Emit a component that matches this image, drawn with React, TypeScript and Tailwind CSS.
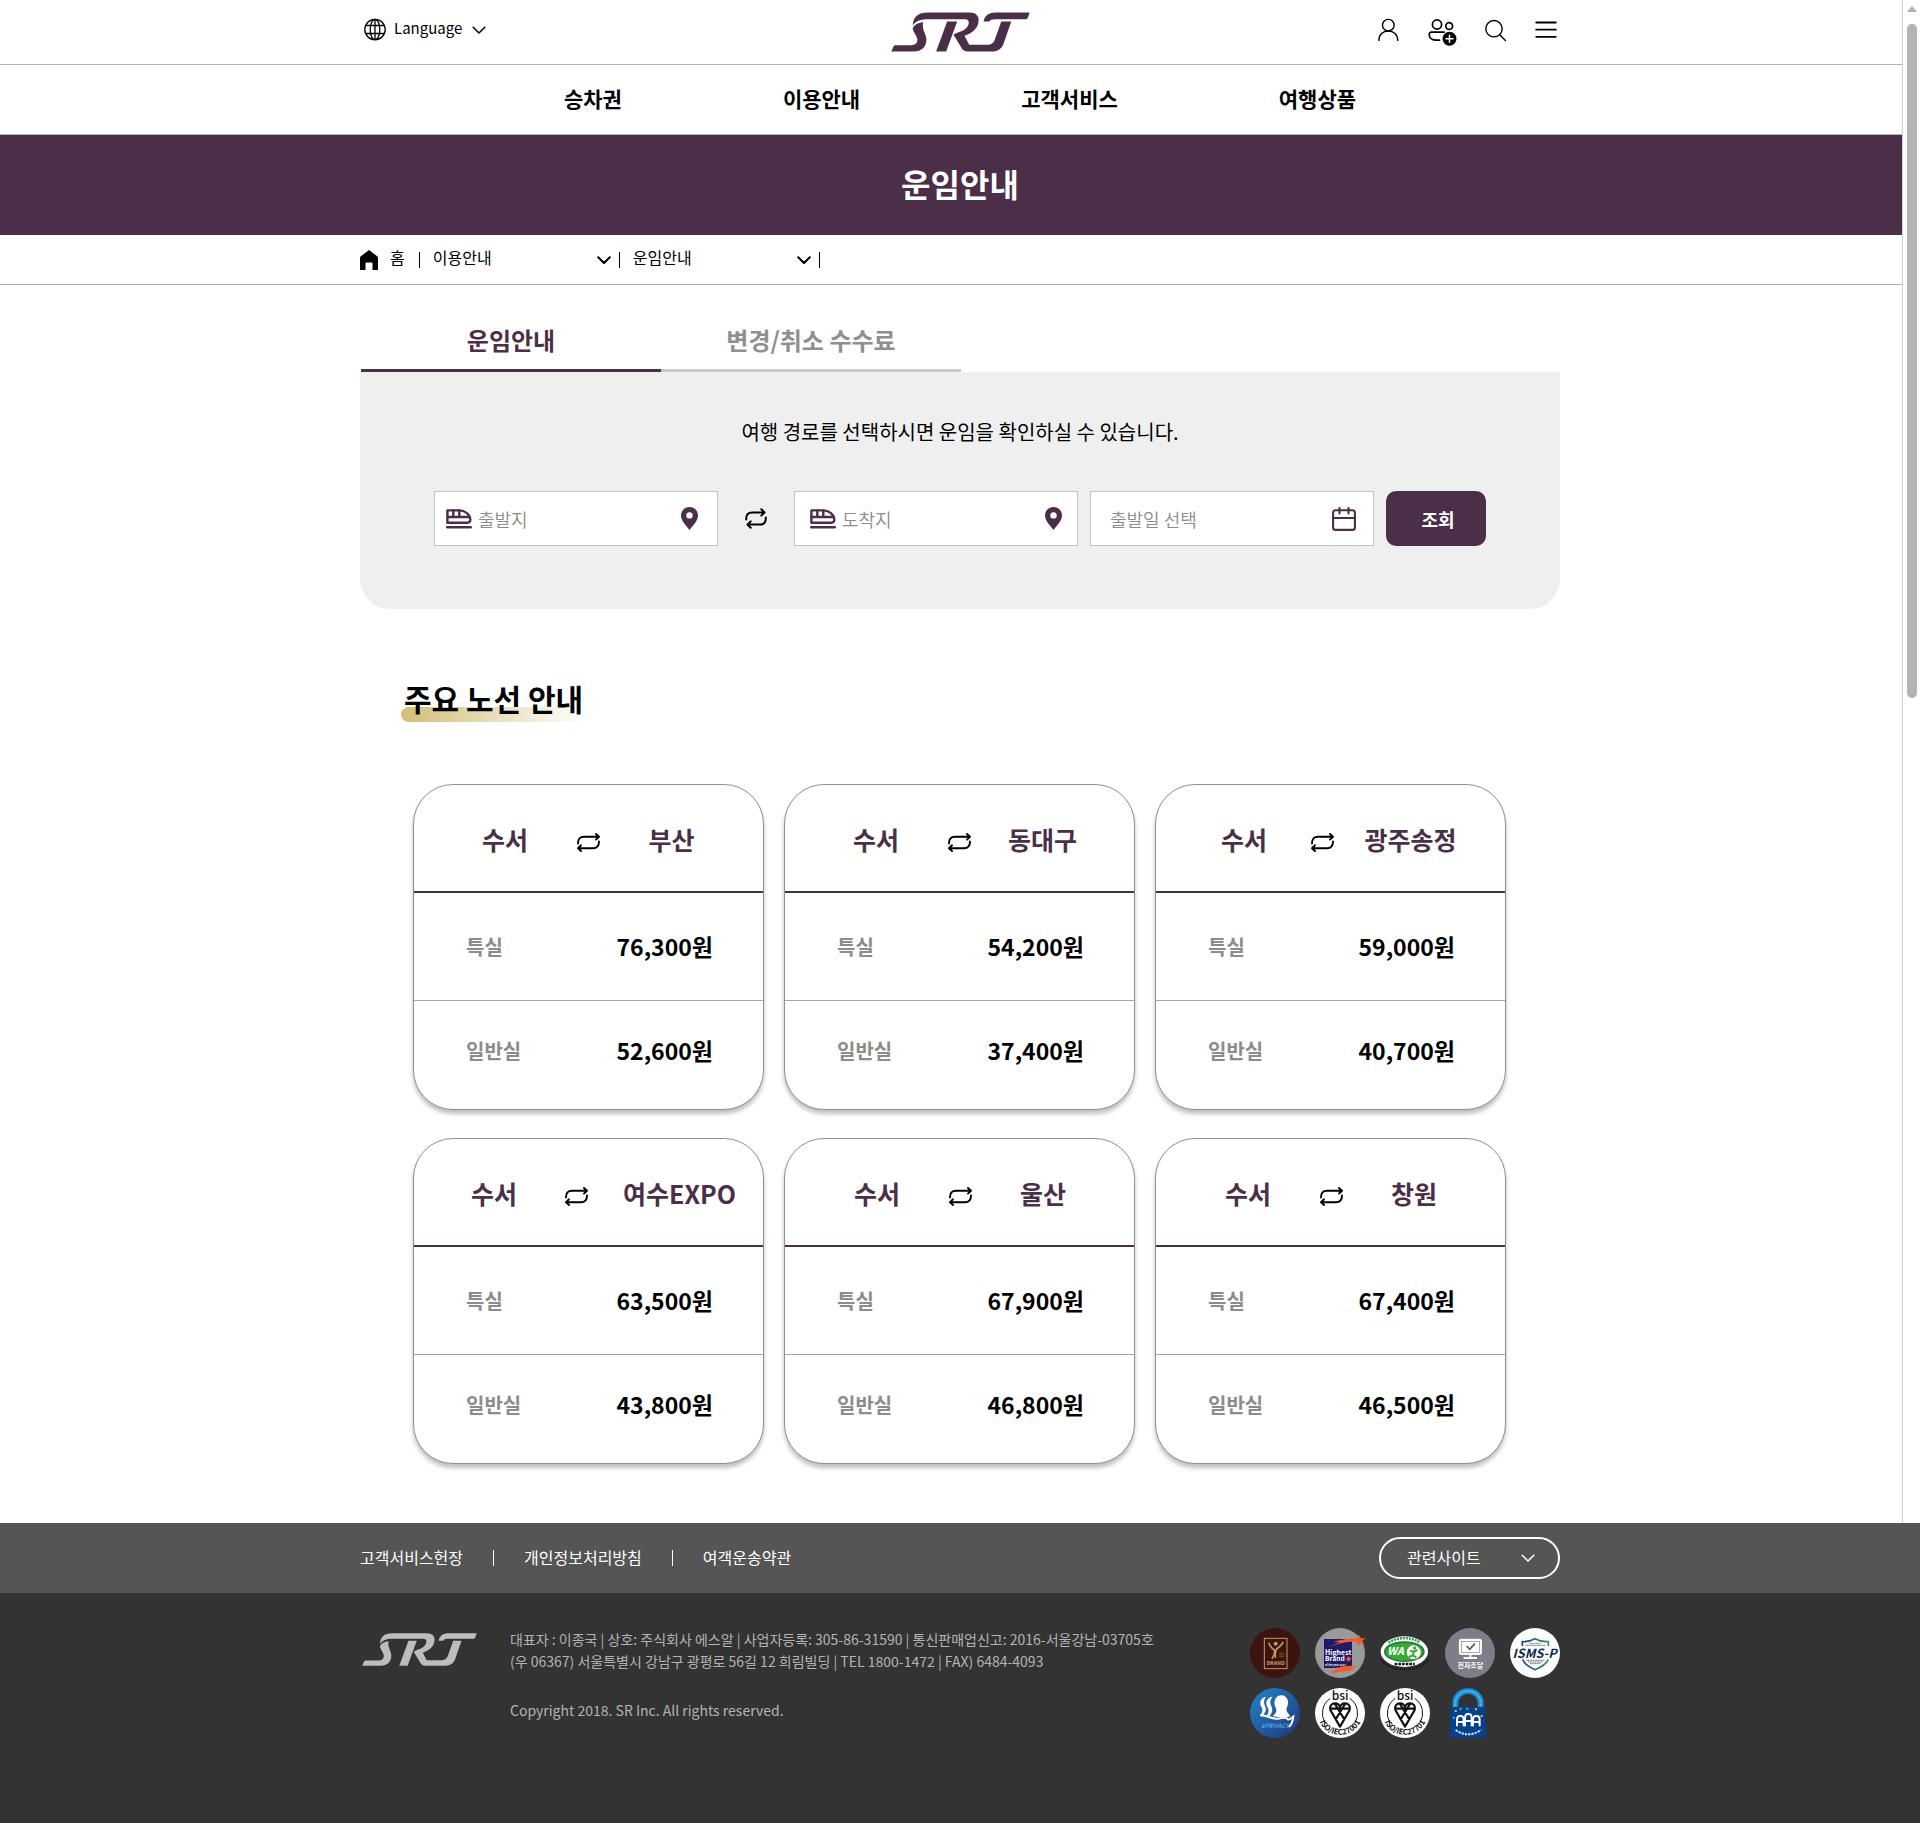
import type { ReactNode } from "react";

type Route = { to: string; first: string; standard: string; pad: string; swap: string };

const routes: Route[] = [
  { to: "부산", first: "76,300원", standard: "52,600원", pad: "pl-[68px] pr-5", swap: "ml-[49px]" },
  { to: "동대구", first: "54,200원", standard: "37,400원", pad: "pl-[68px] pr-5", swap: "ml-[49px]" },
  { to: "광주송정", first: "59,000원", standard: "40,700원", pad: "pl-[65px] pr-[18px]", swap: "ml-11" },
  { to: "여수EXPO", first: "63,500원", standard: "43,800원", pad: "pl-[57px] pr-0", swap: "ml-12 mr-2" },
  { to: "울산", first: "67,900원", standard: "46,800원", pad: "pl-[69px] pr-5", swap: "ml-[49px]" },
  { to: "창원", first: "67,400원", standard: "46,500원", pad: "pl-[69px] pr-5", swap: "ml-[49px]" },
];

function SrtLogo({ className }: { className: string }) {
  return (
    <svg viewBox="32 35 416 119" className={className} fill="currentColor" role="img" aria-label="SRT">
      <path d="M128 65C112 67 100 73 97 84C97 92 110 106 111 117C111 128 104 134 92 134H46C42 134 40 136 39 139L33 153H100C124 153 138 138 138 117C138 100 124 90 128 65Z" />
      <path d="M97 75C98 50 112 36 142 36H266C290 36 298 50 293 69C288 87 274 98 252 106L266 133H318C330 133 338 129 342 119L362 63H392L369 129C363 146 350 153 334 153H264C252 153 247 150 243 142L219 103C224 99 230 97 238 94C252 88 260 83 264 71C267 60 262 56 250 56H142C120 56 105 62 97 75Z" />
      <path d="M200 63H230L197 153H167Z" />
      <path d="M309 63C313 45 325 36 345 36H447L442 50C440 54 438 56 434 56H345C333 56 328 58 326 63Z" />
    </svg>
  );
}

function Chevron({ className }: { className: string }) {
  return (
    <svg viewBox="0 0 14 8" className={className} fill="none" stroke="currentColor" strokeLinecap="round" strokeLinejoin="round" aria-hidden="true">
      <path d="M1.200 1.200 7 7l5.800-5.800" />
    </svg>
  );
}

function RouteSwapIcon() {
  return (
    <svg viewBox="0 0 23 19" className="h-[19px] w-[23px] shrink-0" fill="none" stroke="currentColor" strokeWidth="1.9" strokeLinecap="round" strokeLinejoin="round" role="img" aria-label="왕복">
      <path d="m19 1 3 2.800-3 2.800M1 10.500C1 6 3 3.800 7 3.800h15" />
      <path d="m4 12.300-3 2.900L4 18M22 8.500c0 4.500-2 6.700-6 6.700H1" />
    </svg>
  );
}

function TrainIcon() {
  return (
    <svg viewBox="0 0 26 20" className="h-5 w-[26px] shrink-0 text-[#4b2e47]" fill="none" stroke="currentColor" strokeWidth="2.400" strokeLinecap="round" strokeLinejoin="round" aria-hidden="true">
      <path d="M1.400 1.400h11.600c6 0 11.300 4.200 11.300 9.400 0 1.800-1 2.900-2.900 2.900H1.400z" />
      <path d="M1.400 8h22M7.300 1.400V8M13.300 1.400V8" />
      <path d="M1.200 18.200h23.600" strokeWidth="2.600" />
    </svg>
  );
}

function PinIcon() {
  return (
    <svg viewBox="0 0 17 23" className="h-[23px] w-[17px] shrink-0 text-[#4b2e47]" fill="currentColor" fillRule="evenodd" aria-hidden="true">
      <path d="M8.500 0C13.200 0 17 3.700 17 8.400c0 5.200-5 9.800-8.500 14.600C5 18.200 0 13.600 0 8.400 0 3.700 3.800 0 8.500 0Zm0 5.200a3.200 3.200 0 1 0 0 6.400 3.200 3.200 0 0 0 0-6.400Z" />
    </svg>
  );
}

function CalendarIcon() {
  return (
    <svg viewBox="0 0 24 24" className="size-6 shrink-0 text-[#4b2e47]" fill="none" stroke="currentColor" strokeWidth="2.100" strokeLinecap="round" strokeLinejoin="round" aria-hidden="true">
      <rect x="1.100" y="3.300" width="21.800" height="19.600" rx="2.500" />
      <path d="M1 11h22M7.500 1v5.500M16.500 1v5.500" />
    </svg>
  );
}

function Field({ id, label, pad, before, after }: { id: string; label: string; pad: string; before?: ReactNode; after: ReactNode }) {
  return (
    <label htmlFor={id} className={`flex h-[55px] min-w-0 items-center border border-[#c4c4c4] bg-white ${pad}`}>
      {before}
      <input
        id={id}
        aria-label={label}
        placeholder={label}
        className="min-w-0 flex-1 bg-transparent text-lg font-[350] text-black outline-none placeholder:text-[#8c8c8c]"
      />
      {after}
    </label>
  );
}

function RouteCard({ route }: { route: Route }) {
  return (
    <article className="flex h-[326px] flex-col rounded-[40px] border border-[#909090] bg-white shadow-[0_4px_4px_rgba(0,0,0,0.25)]">
      <h3 className={`flex h-[108px] items-center border-b-2 border-[#4b2e47] pt-1 text-[25px] font-bold text-[#4b2e47] ${route.pad}`}>
        <span>수서</span>
        <span className={`mt-1 text-black ${route.swap}`}>
          <RouteSwapIcon />
        </span>
        <span className="flex-1 text-center">{route.to}</span>
      </h3>
      <dl className="font-bold">
        <div className="flex h-[108px] items-center justify-between border-b border-[#a6a6a6] pr-[50px] pb-px pl-[52px]">
          <dt className="pt-0.5 text-xl text-[#8c8c8c]">특실</dt>
          <dd className="text-[23px]">{route.first}</dd>
        </div>
        <div className="flex h-[98px] items-center justify-between pr-[50px] pl-[52px]">
          <dt className="pt-0.5 text-xl text-[#8c8c8c]">일반실</dt>
          <dd className="text-[23px]">{route.standard}</dd>
        </div>
      </dl>
    </article>
  );
}

function CrumbSelect({ label, options }: { label: string; options: string[] }) {
  return (
    <div className="relative flex w-[199px] items-center">
      <select aria-label={label} defaultValue={label} className="w-full appearance-none bg-transparent pb-1.5 pl-[13px] text-base outline-none">
        {options.map((o) => (
          <option key={o}>{o}</option>
        ))}
      </select>
      <Chevron className="pointer-events-none absolute right-2 h-2 w-3.5 stroke-2" />
    </div>
  );
}

function BsiBadge({ code, id }: { code: string; id: string }) {
  return (
    <svg viewBox="0 0 150 150" className="size-[50px] overflow-visible" role="img" aria-label={`bsi ${code}`}>
      <circle cx="75" cy="75" r="75" fill="#fff" />
      <text x="75" y="37" textAnchor="middle" fontSize="36" fontWeight="500" fill="#111">bsi</text>
      <path d="M46 31A54 54 0 0 0 30 104M104 31A54 54 0 0 1 120 104" fill="none" stroke="#111" strokeWidth="3" />
      <path d="M75 116 46 66C42 54 51 46 60 46c8 0 15 5 15 14 0-9 7-14 15-14 9 0 18 8 14 20ZM46 62h58M60 48l28 46M90 48 62 94" fill="none" stroke="#111" strokeWidth="6.500" strokeLinejoin="round" />
      <path id={id} d="M12 98A68 68 0 0 0 138 98" fill="none" />
      <text fontSize="23" fontWeight="700" fill="#111" textAnchor="middle">
        <textPath href={`#${id}`} startOffset="50%">{code}</textPath>
      </text>
    </svg>
  );
}

function Badges() {
  return (
    <div className="grid grid-cols-[repeat(5,50px)] gap-x-[15px] gap-y-2.5">
      <svg viewBox="0 0 150 150" className="size-[50px]" role="img" aria-label="BRAND">
        <circle cx="75" cy="75" r="75" fill="#3c130e" />
        <g fill="none" stroke="#c39a63">
          <rect x="43" y="31" width="68" height="91" strokeWidth="3" />
          <path d="M56 44c5 14 12 18 17 22 3 8 0 16-7 26M100 42c-7 12-15 17-21 22-4 10-4 18-2 26" strokeWidth="5" />
          <path d="M87 76h16M87 81h16M87 86h16" strokeWidth="2" opacity=".6" />
        </g>
        <circle cx="77" cy="47" r="6" fill="#c39a63" />
        <text x="77" y="112" textAnchor="middle" fontSize="16" fontWeight="700" fill="#c39a63">BRAND</text>
      </svg>
      <svg viewBox="0 0 150 150" className="size-[50px] overflow-visible" role="img" aria-label="Highest Brand">
        <circle cx="75" cy="75" r="75" fill="#9a9a9a" />
        <path d="M27 33h84v87H27z" fill="#201a68" />
        <path d="m42 57 34-15-20 1c20-9 50-12 72-11l5-12 5 11 13-1-9 9 6 12-12-6-9 9 0-13c-27-2-55 6-85 16Z" fill="#f15a29" />
        <path d="m45 130 28-8-12-2c24-6 45-8 66-5l-22 8 18 2c-26 4-50 6-78 12l14-7Z" fill="#f15a29" />
        <text x="30" y="80" fontSize="21" fontWeight="700" fill="#fff">Highest</text>
        <text x="30" y="99" fontSize="20" fontWeight="700" fill="#fff">Brand</text>
        <text x="30" y="113" fontSize="8" fontWeight="700" fill="#fff">of the year 2017</text>
        <path d="m101 83 3 6 6 1-5 5 1 6-5-3-6 3 1-6-4-5 6-1Z" fill="#f15a29" />
      </svg>
      <svg viewBox="0 0 150 150" className="size-[50px]" role="img" aria-label="WA 인증">
        <path d="M3 94c24 40 116 40 144 0" fill="none" stroke="#151515" strokeWidth="7" strokeDasharray="3 3" />
        <ellipse cx="73" cy="71" rx="71" ry="46" fill="#fff" />
        <path d="M26 44c26-18 70-18 94 0" fill="none" stroke="#2d9a3f" strokeWidth="7" strokeDasharray="6 3" />
        <ellipse cx="73" cy="71" rx="61" ry="31" fill="#157a35" />
        <ellipse cx="73" cy="71" rx="56" ry="27" fill="#39a935" />
        <text x="22" y="82" fontSize="32" fontWeight="700" fontStyle="italic" fill="#fff">WA</text>
        <circle cx="101" cy="73" r="21" fill="#fff" />
        <circle cx="104" cy="60" r="5" fill="#39a935" />
        <path d="m90 68 12 3 10-5M102 71l-4 11-12 5M98 81l11 8" fill="none" stroke="#39a935" strokeWidth="6" />
        <path d="M44 108h60" stroke="#151515" strokeWidth="8" strokeDasharray="8 3" />
      </svg>
      <svg viewBox="0 0 150 150" className="size-[50px]" role="img" aria-label="전자조달">
        <circle cx="75" cy="75" r="75" fill="#7c7f88" />
        <g fill="none" stroke="#fff">
          <rect x="43" y="34" width="66" height="45" rx="4" strokeWidth="3" fill="#fff" />
          <rect x="49" y="40" width="54" height="33" strokeWidth="2" stroke="#7c7f88" />
          <path d="m65 54 9 10 16-17" stroke="#555963" strokeWidth="5" />
          <path d="M76 79v8M56 90h40" strokeWidth="6" />
        </g>
        <text x="76" y="121" textAnchor="middle" fontSize="21" fontWeight="700" fill="#fff">전자조달</text>
      </svg>
      <svg viewBox="0 0 150 150" className="size-[50px] overflow-visible" role="img" aria-label="ISMS-P">
        <defs>
          <linearGradient id="shield">
            <stop stopColor="#1b3f8f" />
            <stop offset="1" stopColor="#2f9a4a" />
          </linearGradient>
        </defs>
        <circle cx="75" cy="75" r="75" fill="#fff" />
        <path d="M37 54V41c16 1 27-3 38-9 11 6 22 10 40 9v13M38 94c5 14 20 24 37 31 17-7 34-17 40-31" fill="none" stroke="url(#shield)" strokeWidth="5" />
        <path d="M58 46h34M46 52h60M48 97h56M54 102h44M60 107h32" stroke="#777" strokeWidth="3" strokeDasharray="4 1" />
        <text x="74" y="89" textAnchor="middle" fontSize="38" fontWeight="700" fontStyle="italic" fill="#13294b">ISMS-P</text>
      </svg>
      <svg viewBox="0 0 150 150" className="size-[50px]" role="img" aria-label="ePRIVACY">
        <defs>
          <linearGradient id="privacy" x1="0" x2="1" y2="1">
            <stop stopColor="#1f86c8" />
            <stop offset="1" stopColor="#22357f" />
          </linearGradient>
        </defs>
        <circle cx="75" cy="75" r="75" fill="url(#privacy)" />
        <path d="M31 80c8-8 8-16 2-25-6-12 0-26 15-29-7 9-8 18-3 28 5 11 2 18-5 26ZM49 83c9-9 8-18 2-28-6-12 1-27 17-29-8 9-9 19-4 29 5 11 3 20-5 28Z" fill="#fff" />
        <path d="M68 84c10-9 14-15 9-25-9-18 0-37 17-37 18 0 25 20 17 36-5 10 2 16 9 25 0 6-22 8-52 1Z" fill="#fff" />
        <path d="M30 82c25 1 36 12 54 10 14-3 26-4 29 2 6 2 11-4 17-8-2 15-6 26-14 31" fill="none" stroke="#fff" strokeWidth="6" />
        <text x="75" y="121" textAnchor="middle" fontSize="18" fontWeight="500" fontStyle="italic" fill="#4cb8ea">ePRIVACY</text>
      </svg>
      <BsiBadge id="bsi-a" code="ISO/IEC27001" />
      <BsiBadge id="bsi-b" code="ISO/IEC27701" />
      <svg viewBox="0 0 150 150" className="size-[50px]" role="img" aria-label="AAA">
        <path d="M31 62V44a38 35 0 0 1 76 0v18" fill="none" stroke="#1590dd" strokeWidth="17" />
        <path d="M31 54V44a38 35 0 0 1 76 0v10" fill="none" stroke="#6fc0f0" strokeWidth="5" strokeDasharray="5 3" />
        <rect x="16" y="57" width="106" height="93" rx="5" fill="#06418a" />
        <path d="M29 66h6v6h-6zM90 61h6v6h-6zM107 81h6v6h-6z" fill="#f4b73b" />
        <path d="M44 59h6v6h-6zM64 59h6v6h-6zM23 86h6v6h-6z" fill="#2fc0ee" />
        <g fill="none" stroke="#fff" strokeWidth="6">
          <path d="M36 115V96q0-12 9-12h2q9 0 9 12v19M36 102h20" />
          <path d="M60 115V91q0-13 9-13h2q9 0 9 13v24M60 99h20" />
          <path d="M84 115V96q0-12 9-12h2q9 0 9 12v19M84 102h20" />
        </g>
        <path d="M32 126q37 26 76 0" fill="none" stroke="#d5e4f5" strokeWidth="6" strokeDasharray="7 3" />
      </svg>
    </div>
  );
}

export default function App() {
  return (
    <div className="bg-white font-['Noto_Sans_CJK_KR','Noto_Sans',sans-serif] text-black">
      <div className="relative pb-[58px]">
        <header>
          <div className="border-b border-[#b2b2b2]">
            <div className="mx-auto grid h-16 max-w-[1200px] grid-cols-[1fr_auto_1fr] items-center pb-px">
              <button type="button" className="flex items-center justify-self-start pb-1 pl-1">
                <svg viewBox="0 0 22 23" className="h-[23px] w-[22px]" fill="none" stroke="currentColor" strokeWidth="1.300" aria-hidden="true">
                  <circle cx="11" cy="11.500" r="10.200" />
                  <ellipse cx="11" cy="11.500" rx="4.800" ry="10.200" />
                  <path d="M11 1.300v20.400M2 7.500h18M2 15.500h18" />
                </svg>
                <span className="ml-2 pb-0.5 text-[15px]">Language</span>
                <Chevron className="ml-2.5 h-2 w-3.5 stroke-[1.5]" />
              </button>
              <a href="#home" className="text-[#4b2e47]">
                <SrtLogo className="h-10 w-[139px]" />
              </a>
              <div className="flex items-center gap-7 justify-self-end pr-[3px]">
                <button type="button" aria-label="로그인">
                  <svg viewBox="0 0 22 28" className="h-7 w-[22px]" fill="none" stroke="currentColor" strokeWidth="1.400" strokeLinecap="round">
                    <circle cx="10.300" cy="7.200" r="5.800" />
                    <path d="M.9 22.400c0-6 4-9.400 9.400-9.400s9.400 3.400 9.400 9.400" />
                  </svg>
                </button>
                <button type="button" aria-label="회원가입">
                  <svg viewBox="0 0 29 28" className="h-7 w-[29px]" fill="none" stroke="currentColor" strokeWidth="1.700" strokeLinecap="round">
                    <circle cx="9" cy="6.500" r="4.600" />
                    <circle cx="21.200" cy="8" r="3.400" />
                    <path d="M16 14.200H3.500C2 14.200 1.200 15 1.200 16.500c0 3.500 3 5.700 7.800 5.700h2.500" />
                    <circle cx="21.500" cy="20.800" r="7" fill="currentColor" stroke="none" />
                    <path d="M21.500 17.300v7M18 20.800h7" stroke="#fff" strokeWidth="1.500" />
                  </svg>
                </button>
                <button type="button" aria-label="검색">
                  <svg viewBox="1 0 22 28" className="h-7 w-[22px]" fill="none" stroke="currentColor" strokeWidth="1.400" strokeLinecap="round">
                    <circle cx="10" cy="10.700" r="8.200" />
                    <path d="m16 17 5.400 5.600" />
                  </svg>
                </button>
                <button type="button" aria-label="전체메뉴">
                  <svg viewBox="0 0 22 28" className="h-7 w-[22px]" fill="none" stroke="currentColor" strokeWidth="1.800" strokeLinecap="round">
                    <path d="M1.200 4.500h19.600M1.200 11.700h19.600M1.200 18.800h19.600" />
                  </svg>
                </button>
              </div>
            </div>
          </div>
          <nav className="flex h-[70px] items-center justify-center gap-[161px] border-b border-[#b2b2b2] pb-0.5 text-[21px] font-bold">
            <a href="#ticket">승차권</a>
            <a href="#guide">이용안내</a>
            <a href="#service">고객서비스</a>
            <a href="#tour">여행상품</a>
          </nav>
        </header>

        <div className="flex h-[100px] items-center justify-center bg-[#4b2e47] pb-1">
          <h1 className="text-[32px] font-bold text-white">운임안내</h1>
        </div>

        <div className="border-b border-[#b2b2b2]">
          <div className="mx-auto flex h-[49px] max-w-[1200px] items-center">
            <a href="#home" className="flex items-center gap-3">
              <svg viewBox="0 0 18 20" className="h-5 w-[18px]" fill="currentColor" aria-hidden="true">
                <path d="M9 0l8.200 6.300q.8.600.8 1.600V20h-5.500v-6.500q0-1-1-1h-5q-1 0-1 1V20H0V7.900q0-1 .8-1.600Z" />
              </svg>
              <span className="pb-1.5 text-base">홈</span>
            </a>
            <span className="ml-3.5 h-4 w-px bg-black" />
            <CrumbSelect label="이용안내" options={["승차권", "이용안내", "고객서비스", "여행상품"]} />
            <span className="h-4 w-px bg-black" />
            <CrumbSelect label="운임안내" options={["운임안내"]} />
            <span className="h-4 w-px bg-black" />
          </div>
        </div>

        <main className="mx-auto max-w-[1200px] pt-7">
          <div role="tablist" className="flex pl-px text-2xl font-bold">
            <button type="button" role="tab" aria-selected="true" className="h-[59px] w-[300px] border-b-3 border-[#4b2e47] pb-0.5 text-[#4b2e47]">
              운임안내
            </button>
            <button type="button" role="tab" aria-selected="false" className="h-[59px] w-[300px] border-b-3 border-[#c9c9c9] pb-0.5 text-[#8f8f8f]">
              변경/취소 수수료
            </button>
          </div>

          <section className="rounded-b-[30px] bg-[#efefef] px-[74px] pt-[45px] pb-[63px]">
            <p className="text-center text-xl leading-[30px]">여행 경로를 선택하시면 운임을 확인하실 수 있습니다.</p>
            <form className="mt-11 grid grid-cols-[minmax(0,1fr)_76px_minmax(0,1fr)_12px_minmax(0,1fr)_12px_100px] items-center">
              <Field id="from" label="출발지" pad="pl-[11px] pr-[19px] gap-1.5" before={<TrainIcon />} after={<PinIcon />} />
              <button type="button" aria-label="출발지와 도착지 바꾸기" className="flex justify-center">
                <svg viewBox="0 0 22 21" className="h-[21px] w-[22px]" fill="none" stroke="currentColor" strokeWidth="2" strokeLinecap="round" strokeLinejoin="round" aria-hidden="true">
                  <path d="m16.300 1.200 3.300 3.200-3.300 3.200M1.200 11.500v-1c0-4 2-6.100 6-6.100h12.400" />
                  <path d="M5.700 13.400 2.400 16.600l3.300 3.200M20.800 9.500v1c0 4-2 6.100-6 6.100H2.400" />
                </svg>
              </button>
              <Field id="to" label="도착지" pad="px-[15px] gap-1.5" before={<TrainIcon />} after={<PinIcon />} />
              <span />
              <Field id="date" label="출발일 선택" pad="pl-[19px] pr-[17px]" after={<CalendarIcon />} />
              <span />
              <button type="submit" className="h-[55px] rounded-[10px] bg-[#4b2e47] pl-1 text-lg font-bold text-white">
                조회
              </button>
            </form>
          </section>

          <section className="pt-[67px]">
            <h2 className="relative isolate ml-[41px] inline-block px-[3px] text-[30px] leading-[44px] font-bold before:absolute before:inset-x-0 before:-bottom-0.5 before:-z-10 before:h-[15px] before:rounded-l-lg before:bg-linear-to-r before:from-[#d2be76] before:to-transparent before:content-['']">
              주요 노선 안내
            </h2>
            <div className="mt-16 grid grid-cols-3 gap-x-5 gap-y-7 pr-[54px] pb-px pl-[53px]">
              {routes.map((r) => (
                <RouteCard key={r.to} route={r} />
              ))}
            </div>
          </section>
        </main>

        <div className="absolute inset-y-0 right-0 flex w-[18px] flex-col items-center border-l border-[#cfcfcf] bg-white pt-1.5" aria-hidden="true">
          <svg viewBox="0 0 10 6" className="h-1.5 w-2.5" fill="#b3b3b3">
            <path d="M5 0l5 6H0Z" />
          </svg>
          <div className="mt-3 h-[674px] w-2.5 rounded-full bg-[#b3b3b3]" />
        </div>
      </div>

      <footer className="text-white">
        <div className="bg-[#555]">
          <div className="mx-auto flex h-[70px] max-w-[1200px] items-center justify-between text-base">
            <div className="flex items-center gap-[30px]">
              <a href="#charter" className="pb-0.5">고객서비스헌장</a>
              <span className="h-4 w-px bg-white" />
              <a href="#privacy-policy" className="pb-0.5">개인정보처리방침</a>
              <span className="h-4 w-px bg-white" />
              <a href="#terms" className="pb-0.5">여객운송약관</a>
            </div>
            <div className="relative flex items-center">
              <select aria-label="관련사이트" className="h-[42px] w-[181px] appearance-none rounded-full border-2 border-white bg-transparent pb-0.5 pl-[26px] text-white outline-none">
                <option>관련사이트</option>
              </select>
              <Chevron className="pointer-events-none absolute right-[25px] h-2 w-3.5 stroke-[1.5]" />
            </div>
          </div>
        </div>
        <div className="bg-[#333]">
          <div className="mx-auto flex max-w-[1200px] items-start pt-[35px] pb-[85px]">
            <SrtLogo className="mt-[5px] ml-0.5 h-[33px] w-[115px] text-[#bdbdbd]" />
            <address className="ml-[33px] flex-1 text-sm leading-[22px] text-[#b3b3b3] not-italic">
              <p>대표자 : 이종국 | 상호: 주식회사 에스알 | 사업자등록: 305-86-31590 | 통신판매업신고: 2016-서울강남-03705호</p>
              <p>(우 06367) 서울특별시 강남구 광평로 56길 12 희림빌딩 | TEL 1800-1472 | FAX) 6484-4093</p>
              <p className="mt-[27px]">Copyright 2018. SR Inc. All rights reserved.</p>
            </address>
            <Badges />
          </div>
        </div>
      </footer>
    </div>
  );
}
